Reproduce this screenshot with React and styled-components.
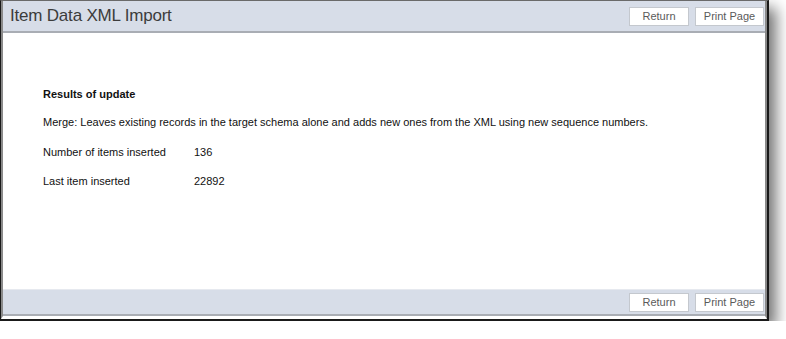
import React from "react";
import styled, { createGlobalStyle } from "styled-components";

const Global = createGlobalStyle`
  html, body { margin: 0; padding: 0; background: #fff; }
  body { font-family: "Liberation Sans", Arial, sans-serif; }
`;

const Window = styled.div`
  width: 766px;
  height: 318px;
  border: 1px solid #1a1a1a;
  border-top-color: #6a6a6a;
  border-bottom-width: 2px;
  border-right-width: 2px;
  box-shadow: 7px 8px 14px rgba(0, 0, 0, 0.55);
  background: #fff;
  display: flex;
  flex-direction: column;
  box-sizing: content-box;
`;

const Inner = styled.div`
  flex: 1;
  display: flex;
  flex-direction: column;
  border-left: 2px solid #8a8a8a;
  border-right: 2px solid #8a8a8a;
  border-bottom: 3px solid #fff;
`;

const Bar = styled.div`
  display: flex;
  align-items: center;
  justify-content: space-between;
  background: #d7dde8;
  height: ${(p) => p.$h}px;
  border-bottom: 2px solid #a9adb4;
  border-top: ${(p) => (p.$top ? "1px solid #e6e9ef" : "none")};
  padding: 0 1px 0 7px;
`;

const Title = styled.h1`
  margin: 0;
  font-size: 17px;
  font-weight: normal;
  color: #3c3c3c;
  letter-spacing: -0.2px;
`;

const Buttons = styled.div`
  display: flex;
  gap: 6px;
  margin-left: auto;
`;

const Button = styled.button`
  font-family: "Liberation Sans", Arial, sans-serif;
  font-size: 11px;
  color: #5a5a5a;
  background: #fff;
  border: 1px solid #c4c8ce;
  height: 19px;
  width: ${(p) => p.$w}px;
  padding: 0;
  cursor: pointer;
`;

const Body = styled.div`
  flex: 1;
  padding: 55px 0 0 40px;
  font-size: 11px;
  color: #111;
`;

const Heading = styled.div`
  font-weight: bold;
  margin-bottom: 16px;
`;

const Para = styled.div`
  margin-bottom: 18px;
`;

const Row = styled.div`
  display: grid;
  grid-template-columns: 151px auto;
  margin-bottom: 17px;
`;

function Toolbar({ h, top, children }) {
  return (
    <Bar $h={h} $top={top}>
      {children}
      <Buttons>
        <Button $w={60}>Return</Button>
        <Button $w={69}>Print Page</Button>
      </Buttons>
    </Bar>
  );
}

export default function App() {
  return (
    <>
      <Global />
      <Window>
        <Inner>
          <Toolbar h={30}>
            <Title>Item Data XML Import</Title>
          </Toolbar>
          <Body>
            <Heading>Results of update</Heading>
            <Para>
              Merge: Leaves existing records in the target schema alone and adds new ones from the XML using new sequence numbers.
            </Para>
            <Row>
              <span>Number of items inserted</span>
              <span>136</span>
            </Row>
            <Row>
              <span>Last item inserted</span>
              <span>22892</span>
            </Row>
          </Body>
          <Toolbar h={24} top />
        </Inner>
      </Window>
    </>
  );
}
